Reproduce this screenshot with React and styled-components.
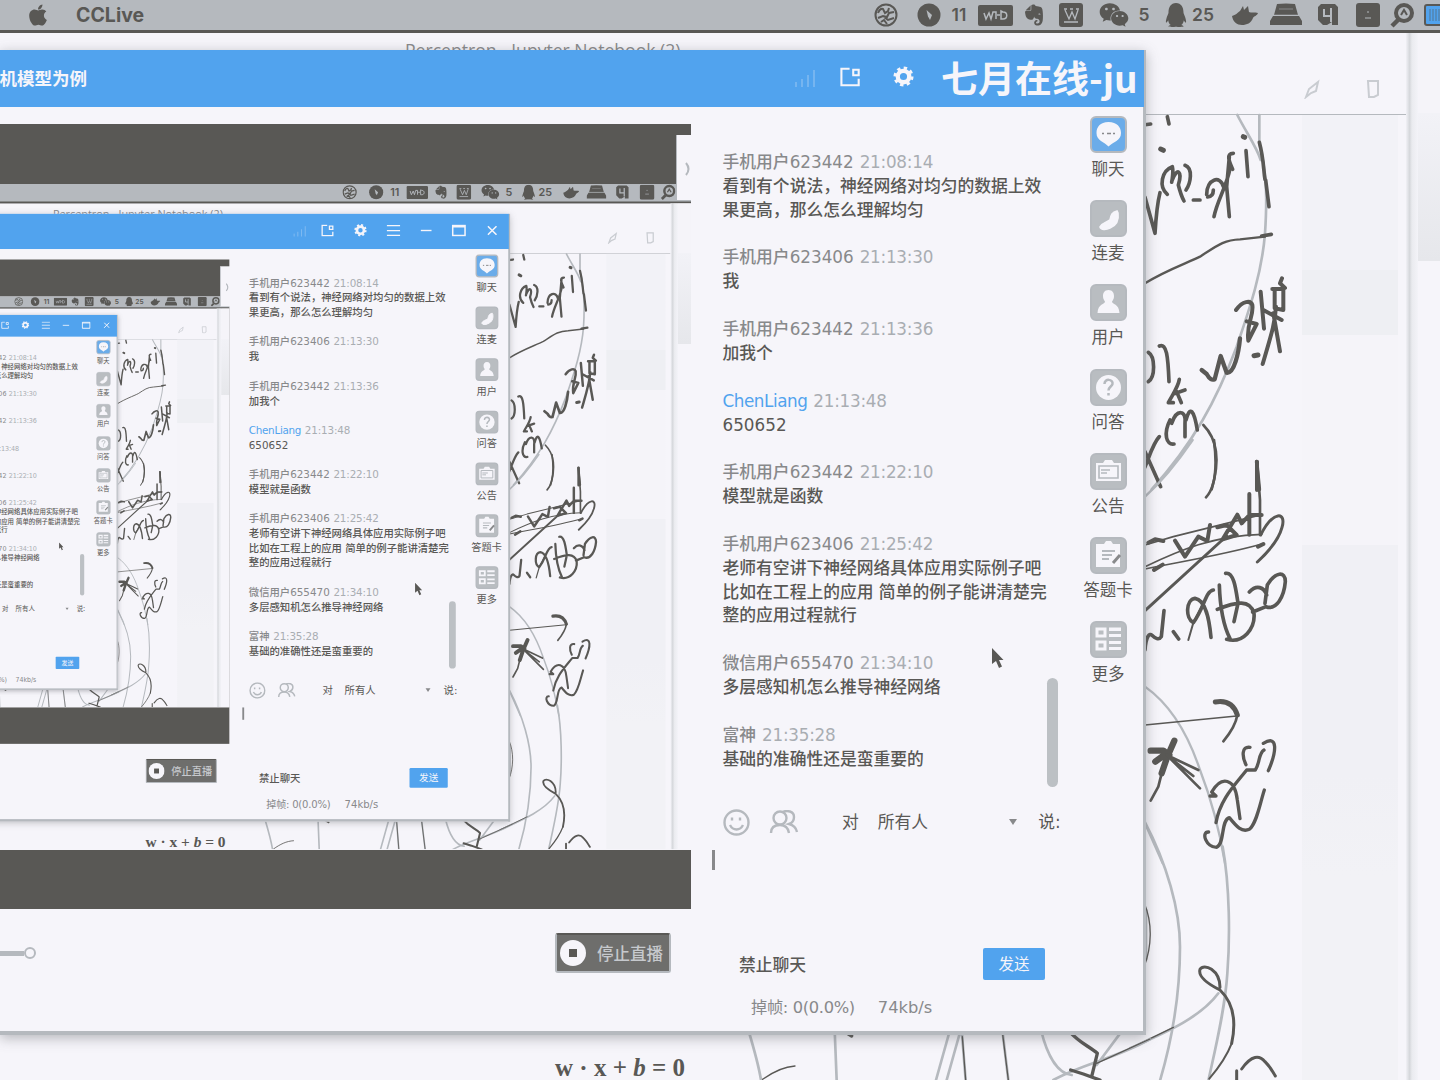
import React from 'react';
import styled, { createGlobalStyle } from 'styled-components';
import { FaApple, FaEvernote, FaWeixin, FaQq } from 'react-icons/fa';

const C = {
  paper: '#f6f5fa',
  grey: '#b5b9be',
  mid: '#88898b',
  ink: '#595855',
  blue: '#51a3ee',
};

const SCALE = 0.617;
const LEVELS = 3;

const GlobalStyle = createGlobalStyle`
  *, *::before, *::after { box-sizing: border-box; }
  body {
    margin: 0;
    background: ${C.paper};
    overflow: hidden;
    font-family: "DejaVu Sans", "Noto Sans CJK SC", sans-serif;
  }
  svg { display: block; }
`;

/* ---------- screen & desktop ---------- */

const Screen = styled.div`
  position: relative;
  width: 1440px;
  height: 1080px;
  overflow: hidden;
  background: ${C.paper};
  color: ${C.ink};
  display: flex;
  flex-direction: column;
`;

const MenuBar = styled.header`
  flex: none;
  height: 33px;
  display: flex;
  align-items: center;
  background: ${C.grey};
  border-bottom: 3px solid ${C.ink};
  padding-left: 26px;
  overflow: hidden;
  & > svg { flex: none; }
`;

const AppName = styled.span`
  flex: none;
  width: 798px;
  margin-left: 26px;
  font: 700 19.5px/30px Inter, "Liberation Sans", sans-serif;
`;

const Slot = styled.span`
  flex: none;
  width: ${(p) => p.$w}px;
  margin-left: ${(p) => p.$gap}px;
  display: flex;
  justify-content: center;
  font: 600 17.5px/30px Inter, "Liberation Sans", sans-serif;
`;

const Desktop = styled.main`
  position: relative;
  flex: 1;
  display: flex;
  flex-direction: column;
`;

const BrowserTop = styled.div`
  height: 82px;
  width: 1406px;
  border-bottom: 1px solid ${C.grey};
  display: flex;
  justify-content: space-between;
`;

const BrowserTitle = styled.span`
  padding: 5px 0 0 405px;
  font: 17.6px/24px "Open Sans", "Liberation Sans", sans-serif;
  color: ${C.mid};
`;

const BrowserTools = styled.div`
  display: flex;
  gap: 43px;
  padding: 46px 25px 0 0;
  color: #c9ccd1;
`;

const Page = styled.div`
  flex: 1;
  display: flex;
  justify-content: flex-end;
`;

const SideShade = styled.div`
  width: 96px;
  background: linear-gradient(#f2f2f7 0 155px, #eeeff3 155px 220px, #f5f4f9 220px 430px, #f0f0f5 430px 660px, #f2f2f6 760px);
`;

const EdgeShade = styled.div`
  width: 12px;
  margin: -82px 0 0 8px;
  background: linear-gradient(90deg, #f1f1f6, #d5d7db 30%, #eaebef 50%, #f3f3f8);
`;

const Gutter = styled.div`
  width: 22px;
  margin-top: -82px;
  background: linear-gradient(#f5f4f9 0 80px, #f2f2f7 80px, #e6e7eb 228px, ${C.paper} 228px);
`;

const Sketch = styled.svg`
  position: absolute;
  left: 0;
  top: -33px;
  fill: none;
  stroke-linecap: round;
  stroke-linejoin: round;
`;

const Formula = styled.div`
  position: absolute;
  left: 555px;
  top: 1020px;
  font: bold 25px/30px "Liberation Serif", serif;
  white-space: pre;
  i { font-style: italic; }
`;

/* ---------- live window ---------- */

const Window = styled.section`
  position: absolute;
  left: 0;
  top: 17px;
  width: 1146px;
  height: 985px;
  display: flex;
  flex-direction: column;
  background: ${C.paper};
  border-right: 3px solid ${C.grey};
  border-bottom: 4px solid ${C.grey};
  box-shadow: 0 3px 12px rgba(90, 92, 98, 0.42);
`;

const TitleBar = styled.div`
  position: relative;
  flex: none;
  height: 57px;
  margin-right: -1px;
  display: flex;
  align-items: center;
  background: ${C.blue};
  color: ${C.paper};
  overflow: hidden;
`;

const Title = styled.div`
  width: 87px;
  display: flex;
  justify-content: flex-end;
  white-space: nowrap;
  font-size: 17.5px;
  font-weight: 700;
  margin: 0 699px 3px 0;
`;

const TitleIcon = styled.span`
  flex: none;
  width: ${(p) => p.$w || 53.2}px;
  margin-bottom: 4px;
  display: flex;
  justify-content: center;
  opacity: ${(p) => (p.$faint ? 0.3 : 1)};
`;

const Watermark = styled.div`
  position: absolute;
  left: 941px;
  top: 0;
  font: 700 37px/54px "Noto Sans CJK SC", sans-serif;
  white-space: nowrap;
`;

const Body = styled.div`
  flex: 1;
  display: flex;
  min-height: 0;
`;

const StageColumn = styled.div`
  flex: none;
  width: 691px;
  padding-top: 17px;
  display: flex;
  flex-direction: column;
`;

const Stage = styled.div`
  position: relative;
  height: 785px;
  padding: 60px 0 59px;
  background: ${C.ink};
`;

const Capture = styled.div`
  height: 666px;
  overflow: hidden;
  background: ${C.paper};
`;

const Shrink = styled.div`
  width: 1440px;
  height: 1080px;
  margin: -1px 0 0 -197.400px;
  transform: scale(${SCALE});
  transform-origin: 0 0;
`;

const Handle = styled.div`
  position: absolute;
  right: -2px;
  top: 11px;
  width: 17px;
  height: 65px;
  padding-top: 2px;
  display: flex;
  align-items: center;
  justify-content: flex-end;
  border-left: 1px solid ${C.grey};
  background: ${C.paper};
  color: ${C.grey};
`;

const Controls = styled.div`
  display: flex;
  align-items: center;
  justify-content: space-between;
  padding: 24px 20px 0 0;
`;

const Slider = styled.div`
  display: flex;
  align-items: center;
`;

const Track = styled.div`
  width: 24px;
  height: 5px;
  background: ${C.grey};
`;

const Knob = styled.div`
  width: 12px;
  height: 12px;
  border: 2.5px solid ${C.grey};
  border-radius: 50%;
`;

const StopButton = styled.button`
  width: 116px;
  height: 40px;
  padding: 0 0 0 3px;
  display: flex;
  align-items: center;
  gap: 11px;
  border: 2px solid ${C.grey};
  border-top-color: ${C.ink};
  border-radius: 3px;
  background: #6e6e6c;
  color: #c6c9cd;
  font: 500 16.5px "Noto Sans CJK SC", sans-serif;
  white-space: nowrap;
`;

const StopDisc = styled.span`
  flex: none;
  width: 26px;
  height: 26px;
  border-radius: 50%;
  background: linear-gradient(${C.ink}, ${C.ink}) center / 8px 8px no-repeat ${C.paper};
`;

/* ---------- chat ---------- */

const Chat = styled.div`
  flex: none;
  width: 382px;
  display: flex;
  flex-direction: column;
  font-size: 16.8px;
`;

const Log = styled.div`
  height: 698px;
  display: flex;
  justify-content: space-between;
  padding: 44px 15px 0 31.5px;
`;

const Messages = styled.div`
  display: flex;
  flex-direction: column;
  gap: 23.8px;
  line-height: 23.9px;
  white-space: nowrap;
`;

const Message = styled.div`
  display: flex;
  flex-direction: column;
  font-weight: 500;
`;

const Meta = styled.div`
  display: flex;
  gap: 6px;
  height: 23.9px;
`;

const Sender = styled.span`
  color: ${(p) => (p.$host ? C.blue : C.mid)};
  letter-spacing: ${(p) => (p.$host ? -0.45 : 0)}px;
`;

const Time = styled.time`
  color: #a9adb2;
  letter-spacing: -0.25px;
`;

const Line = styled.span`
  height: 23.9px;
`;

const Thumb = styled.div`
  width: 11px;
  height: 109px;
  margin-top: 527px;
  margin-left: -10px;
  border-radius: 6px;
  background: #bcc0c4;
`;

const ToolRow = styled.div`
  height: 34px;
  display: flex;
  align-items: center;
  padding-left: 32px;
  color: ${C.grey};
`;

const Label = styled.span`
  color: ${C.ink};
  margin: 0 0 2px ${(p) => p.$gap}px;
  white-space: nowrap;
`;

const PeopleIcon = styled.svg`
  margin-left: 19px;
`;

const Caret = styled.span`
  margin-left: 81px;
  border: 4px solid transparent;
  border-top: 6px solid ${C.mid};
  border-bottom: 0;
`;

const Input = styled.div`
  height: 109px;
  padding: 11px 0 0 21px;
`;

const TextCursor = styled.div`
  width: 3px;
  height: 20px;
  background: ${C.mid};
`;

const ActionRow = styled.div`
  height: 32px;
  display: flex;
  align-items: center;
  justify-content: space-between;
  padding: 0 28px 0 48px;
  font-weight: 500;
`;

const Send = styled.button`
  width: 62px;
  height: 32px;
  padding: 0 0 2px;
  border: 0;
  border-radius: 2px;
  background: ${C.blue};
  color: ${C.paper};
  font: 15.5px "Noto Sans CJK SC", sans-serif;
`;

const Status = styled.div`
  display: flex;
  gap: 23px;
  padding: 16px 0 0 60px;
  line-height: 24px;
  font-size: 16.3px;
  color: ${C.mid};
  white-space: nowrap;
`;

const Dropped = styled.span`
  letter-spacing: -0.35px;
`;

/* ---------- right rail ---------- */

const Rail = styled.nav`
  flex: none;
  width: 70px;
  padding-top: 9px;
  display: flex;
  flex-direction: column;
  gap: 12.2px;
`;

const RailItem = styled.div`
  height: 72px;
  display: flex;
  flex-direction: column;
  align-items: center;
  gap: 4px;
  font-size: 16.5px;
  line-height: 25px;
  white-space: nowrap;
`;

const Tile = styled.span`
  width: 37px;
  height: 37px;
  border-radius: 6px;
  border: 2px solid ${C.grey};
  background: ${(p) => (p.$active ? '#6bace9' : '#b9bdc1')};
  color: ${C.paper};
`;

const Pointer = styled.svg`
  position: absolute;
  left: 990px;
  top: 597px;
`;

/* ---------- drawings ---------- */

const Menu = {
  globe: (
    <svg width="24" height="24" viewBox="0 0 24 24" fill="none" stroke={C.ink} strokeWidth="2">
      <circle cx="12" cy="12" r="10.5" />
      <path d="M4 10q2-5 5-4l2 4 3-2 1-3M20 9l-5 1-2 4-4-1-5 2M10 14l4 3 6-2M7 19l3-2 3 4" strokeWidth="2" />
    </svg>
  ),
  compass: (
    <svg width="24" height="24" viewBox="0 0 24 24">
      <circle cx="12" cy="12" r="11.5" fill={C.ink} />
      <path d="M9.500 7l5.500 5-2 5-2-3.500z" fill={C.grey} />
    </svg>
  ),
  drive: (
    <svg width="32" height="24" viewBox="0 0 32 24" fill={C.ink}>
      <path d="M7 1q9-1 18 0l3 11H4z" />
      <path d="M3 13h26l3 5v4H0v-4z" />
      <path d="M4 12h24M9 6h14" stroke={C.grey} strokeWidth=".5" />
    </svg>
  ),
  bird: (
    <svg width="26" height="24" viewBox="0 0 26 24" fill={C.ink}>
      <path d="M0 13c4-1 5-3 8-5l3-5 1 4 4-4 1 6c2 1 6 0 9 1-1 3-4 3-5 5-2 5-6 7-11 7S1 19 0 13z" />
    </svg>
  ),
  notch: (
    <svg width="22" height="24" viewBox="0 0 22 24">
      <path d="M4 1h14l3 3v18h-6v-3l-5 3H6l-5-5V4z" fill={C.ink} />
      <path d="M7 6v7h7M14 5v14" fill="none" stroke={C.grey} strokeWidth="2" />
    </svg>
  ),
  card: (
    <svg width="24" height="24" viewBox="0 0 24 24">
      <rect width="24" height="24" rx="3" fill={C.ink} />
      <path d="M11 9h2M9 15h6" stroke={C.grey} strokeWidth="1" />
    </svg>
  ),
  find: (
    <svg width="24" height="26" viewBox="0 0 24 26" fill="none" stroke={C.ink}>
      <circle cx="14" cy="11" r="8" strokeWidth="4" />
      <path d="M8 18l-6 6" strokeWidth="4.500" />
      <path d="M11 13l3-5 3 5" strokeWidth="2" />
    </svg>
  ),
  box: (
    <svg width="24" height="24" viewBox="0 0 24 24" fill="none">
      <rect width="24" height="24" rx="3" fill={C.ink} />
      <path d="M5 6h3M11 6h3M17 6h3M6 7l4 9 3-7 3 7 3-9M5 19h14" stroke={C.grey} strokeWidth="1.300" />
    </svg>
  ),
  disk: (
    <svg width="35" height="21" viewBox="0 0 35 21" fill="none">
      <rect width="35" height="21" rx="2" fill={C.ink} />
      <path d="M6 8l2 6 3-6 2 6 2-7h3v7M19 10h3M23 6v8h2c5 0 5-7 0-7z" stroke={C.grey} strokeWidth="1.500" />
    </svg>
  ),
  screen: (
    <svg width="24" height="22" viewBox="0 0 24 22">
      <rect x="1" y="1" width="30" height="20" rx="2" fill={C.blue} stroke={C.ink} strokeWidth="2" />
      <path d="M6 5v12M9 5v12M12 5v12M15 5v12" stroke={C.ink} strokeWidth="1" opacity=".6" />
    </svg>
  ),
};

const popOut = (
  <svg width="23" height="20" viewBox="0 0 24 22" fill="none" stroke={C.paper} strokeWidth="2.300">
    <path d="M11 2H2v18h19v-7M15 3h6v6h-6z" />
  </svg>
);
const gear = (
  <svg width="21" height="21" viewBox="0 0 22 22" fill="none" stroke={C.paper}>
    <circle cx="11" cy="11" r="6" strokeWidth="4.500" />
    <circle cx="11" cy="11" r="9" strokeWidth="3" strokeDasharray="3.530 3.530" />
  </svg>
);
const burger = (
  <svg width="22" height="20" viewBox="0 0 22 20" stroke={C.paper} strokeWidth="2">
    <path d="M0 2h22M0 10h22M0 18h22" />
  </svg>
);
const minus = (
  <svg width="18" height="4" stroke={C.paper} strokeWidth="2.500">
    <path d="M0 2h18" />
  </svg>
);
const maximize = (
  <svg width="24" height="20" fill="none" stroke={C.paper} strokeWidth="2.500">
    <path d="M2 2h20v16H2zM2 4h20" />
  </svg>
);
const close = (
  <svg width="16" height="16" stroke={C.paper} strokeWidth="2.500">
    <path d="M1 1l14 14M15 1L1 15" />
  </svg>
);
const signal = (
  <svg width="22" height="20" stroke={C.paper} strokeWidth="1.500">
    <path d="M2 20v-5M8 20v-8M14 20V8M20 20V3" />
  </svg>
);

const TileArt = ({ kind }) => (
  <svg width="33" height="33" viewBox="0 0 33 33" fill="none" stroke={C.grey} strokeWidth="1.600">
    {kind === 'chat' && (
      <>
        <path d="M16.500 4C8 4 4.500 9 4.500 15c0 8 8 9 12 13.500C21 24 29 23 29 15c0-6-4-11-12.500-11z" fill={C.paper} stroke="none" />
        <path d="M10 15.500h2M15 15.500h4M21 15.500h2" stroke={C.mid} />
      </>
    )}
    {kind === 'call' && (
      <path d="M25 9c-5 1-6 4-7 9-4 3-7 2-10 7 1 3 6 3 10 1 7-3 9-8 8-15z" fill={C.paper} stroke={C.paper} />
    )}
    {kind === 'user' && (
      <path d="M16.500 4c-4 0-5.500 3-5.500 6s1 4 2 5.500c0 3-7 2-7.500 11.500h22c-.5-9.500-7.500-8.500-7.500-11.500 1-1.500 2-2.500 2-5.500s-1.500-6-5.500-6z" fill={C.paper} stroke="none" />
    )}
    {kind === 'ask' && (
      <>
        <circle cx="16.500" cy="16.500" r="12.500" fill={C.paper} stroke="none" />
        <path d="M12.500 13c0-6 9-5 8 0-.5 2.500-4 3-4 6.500M16.500 22v2.500" strokeWidth="2.500" />
      </>
    )}
    {kind === 'notice' && (
      <>
        <path d="M4 8h7l2-3h7l2 3h7v18H4z" fill={C.paper} stroke="none" />
        <path d="M7 11h19v12H7zM9 15h9M9 18h6" />
      </>
    )}
    {kind === 'quiz' && (
      <>
        <path d="M4 5h8l2-3h5l2 3h7v23H4z" fill={C.paper} stroke="none" />
        <path d="M10 12h13M10 16h10M10 20h7" strokeWidth="1.800" />
        <path d="M28 16l-7 8" stroke={C.mid} strokeWidth="3" />
      </>
    )}
    {kind === 'more' && (
      <>
        <path d="M5 6h8v7H5zM5 19h8v7H5z" stroke={C.paper} strokeWidth="3" />
        <path d="M17 4.500h12v3.500H17zM17 11h12v3H17zM17 18h12v3H17zM17 24h12v3H17z" fill={C.paper} stroke="none" />
      </>
    )}
  </svg>
);

const Ink = ({ d, w = 11, c = C.ink }) => <path d={d} stroke={c} strokeWidth={w} />;
const third = (x, y) => `translate(${x} ${y}) scale(.33333)`;

const Whiteboard = () => (
  <Sketch width="1440" height="1080" viewBox="0 0 1440 1080">
    <g transform={third(1130, 90)}>
      <Ink c={C.grey} w={8} d="M388 75V160C408 240 413 310 405 430C395 560 350 680 320 770C260 930 190 1060 65 1198M322 75C350 130 380 170 392 210" />
      <Ink d="M40 105L62 102M112 80L117 102M45 322L75 430C78 380 82 340 90 308M112 313C85 290 95 242 127 230C132 250 122 290 126 272C142 228 158 245 145 285C150 305 155 320 162 333M165 226C190 235 182 280 168 300M190 330H210M230 314C230 265 272 255 280 290M233 321C247 320 250 308 250 300M310 190C285 190 300 220 308 238M298 200L290 290L298 380M300 235C290 290 262 330 252 380M348 182L354 260M388 157C402 210 400 240 405 268M407 270L417 350" />
      <Ink w={15} d="M92 177L100 181M340 140L344 142M372 797L384 795" />
      <Ink w={7} d="M45 580C110 540 170 520 210 500C260 468 280 450 330 448L405 440" />
      <Ink w={11} d="M395 438L424 433" />
      <Ink w={12} d="M318 660C338 632 362 630 367 645C372 680 348 700 355 752L380 702L350 694M392 605L402 716M400 660L455 690M427 597H460V660L434 655V600M456 565L450 580L465 594M438 650C435 700 425 730 398 822M430 670L450 784" />
      <Ink w={13} d="M215 840L230 852C240 870 246 870 254 868L272 798L290 848C312 852 326 790 330 745" />
      <Ink d="M55 787C76 800 76 862 55 875M88 768C110 758 114 800 117 875M148 868C145 890 130 910 115 938H130M130 912L165 900M140 905L154 938M120 990C100 1030 108 1066 132 1062M125 1000C140 955 170 960 165 1000V1040M168 990C180 945 192 960 202 1020M88 1040C68 1060 55 1110 43 1135M45 1085L92 1190M380 1115L388 1198" />
      <Ink w={8} d="M220 1005C265 1050 268 1120 245 1198" />
    </g>
    <g transform={third(1130, 440)}>
      <Ink c={C.grey} w={7} d="M188 0C140 70 100 120 45 170M45 740C130 800 180 900 210 990C245 1080 270 1180 285 1270M45 1150L98 1270" />
      <Ink w={8} d="M252 0C262 80 258 140 228 172M381 65L390 180V285" />
      <Ink w={5} d="M45 315L130 290L395 224M45 380C150 330 250 287 395 283M45 387C150 365 280 345 395 312M45 855L320 828" />
      <Ink w={12} d="M55 308L75 298L100 303M135 302L165 350L205 290L232 303L240 255M262 262L290 255L320 285L278 298L322 224L335 250L358 225L395 225M72 390L98 374M384 320L400 312M358 162V284M381 65V150" />
      <Ink w={9} d="M392 285C430 210 470 215 456 262C445 305 410 340 382 366M45 512L290 288" />
      <Ink w={11} d="M45 630C48 585 60 580 65 585C78 598 88 600 94 590L102 512M130 575L146 597M250 450C225 455 225 500 190 548C165 535 168 478 195 475C228 480 238 540 243 592M268 435C270 500 282 560 300 596M287 400C312 395 318 450 324 490L312 545M262 508C320 485 360 478 372 520C376 565 340 612 290 598M358 456C380 432 402 442 410 465M405 490L412 435C436 395 466 392 466 425C462 470 440 512 408 500L368 516" />
      <Ink w={6} d="M225 480L190 548L175 600" />
      <Ink w={15} d="M256 786C290 780 312 795 322 825" />
      <Ink w={8} d="M322 825C318 850 300 880 280 904" />
      <Ink w={19} d="M62 932H100L118 945M133 902L112 950L95 1000M76 965L110 940" />
      <Ink w={8} d="M95 1000L85 1040L62 1082M110 945L205 990M115 950L190 1008M120 955L210 1045" />
      <Ink w={10} d="M360 922C334 918 336 950 348 974M400 910C445 882 440 935 415 992M402 930C385 940 390 970 376 990H350C310 1040 270 1080 258 1148M240 1068H258L245 1056C275 1005 315 1015 322 1080L330 1136M236 1176C212 1175 228 1222 260 1222C285 1210 272 1140 298 1133C320 1160 335 1178 358 1168C380 1150 390 1090 403 1050" />
    </g>
    <g transform={third(1130, 760)}>
      <Ink c={C.grey} w={8} d="M45 187C110 310 150 450 150 560C150 720 120 860 90 962M278 260C300 380 300 540 292 640C285 750 255 870 235 962M0 865C100 820 210 775 265 700M48 450V600" />
      <Ink w={4} d="M43 430C68 490 65 560 43 618M0 865L130 802" />
      <Ink w={9} d="M270 682C270 630 222 608 210 628C202 655 250 680 270 690C312 730 318 790 305 850M335 927C365 885 388 885 405 905C425 925 430 940 436 948M320 932V962" />
      <Ink w={6} d="M305 850C290 890 260 930 238 956" />
    </g>
    <g transform={third(700, 790)}>
      <Ink c={C.grey} w={8} d="M145 720C160 770 175 820 183 870M404 720L410 870M750 720L708 870M782 720L740 870M785 720L797 870M907 720L925 870M1023 720C1040 790 1070 850 1115 855M1265 724L1190 825M1060 870C1150 820 1250 805 1350 747" />
      <Ink w={4} d="M188 868C220 845 250 830 285 828M787 740L797 870M907 725L925 870M1190 820L1350 747" />
      <Ink w={10} d="M432 724L455 738M1108 724C1140 760 1170 770 1192 790L1175 860M1112 840L1150 852L1200 870" />
    </g>
  </Sketch>
);

/* ---------- data ---------- */

const MENU_ITEMS = [
  [24, 0, Menu.globe],
  [24, 19, Menu.compass],
  [18, 9, '11'],
  [35, 10, Menu.disk],
  [24, 9, <FaEvernote size={24} key="e" />],
  [24, 13, Menu.box],
  [30, 16, <FaWeixin size={30} key="w" />],
  [12, 9, '5'],
  [22, 15, <FaQq size={24} key="q" />],
  [24, 4, '25'],
  [26, 17, Menu.bird],
  [32, 12, Menu.drive],
  [22, 15, Menu.notch],
  [24, 17, Menu.card],
  [24, 10, Menu.find],
  [24, 10, Menu.screen],
];

const MESSAGES = [
  ['手机用户623442', '21:08:14', ['看到有个说法，神经网络对均匀的数据上效', '果更高，那么怎么理解均匀']],
  ['手机用户623406', '21:13:30', ['我']],
  ['手机用户623442', '21:13:36', ['加我个']],
  ['ChenLiang', '21:13:48', ['650652'], true],
  ['手机用户623442', '21:22:10', ['模型就是函数']],
  ['手机用户623406', '21:25:42', ['老师有空讲下神经网络具体应用实际例子吧', '比如在工程上的应用 简单的例子能讲清楚完', '整的应用过程就行']],
  ['微信用户655470', '21:34:10', ['多层感知机怎么推导神经网络']],
  ['富神', '21:35:28', ['基础的准确性还是蛮重要的']],
];

const RAIL = [
  ['chat', '聊天'],
  ['call', '连麦'],
  ['user', '用户'],
  ['ask', '问答'],
  ['notice', '公告'],
  ['quiz', '答题卡'],
  ['more', '更多'],
];

/* ---------- composition ---------- */

const ChatPanel = () => (
  <Chat>
    <Log>
      <Messages>
        {MESSAGES.map(([name, time, lines, host]) => (
          <Message key={time}>
            <Meta>
              <Sender $host={host}>{name}</Sender>
              <Time>{time}</Time>
            </Meta>
            {lines.map((line) => (
              <Line key={line}>{line}</Line>
            ))}
          </Message>
        ))}
      </Messages>
      <Thumb />
    </Log>
    <ToolRow>
      <svg width="27" height="27" viewBox="0 0 27 27" fill="none" stroke="currentColor" strokeWidth="2.400">
        <circle cx="13.500" cy="13.500" r="12" />
        <path d="M9 8.500v3M17 8.500v3M7 16c3 6 10 6 13 0" />
      </svg>
      <PeopleIcon width="30" height="25" viewBox="0 0 30 25" fill="none" stroke="currentColor" strokeWidth="2.400">
        <circle cx="11" cy="8" r="6.500" />
        <path d="M2 23c0-5 3-8 9-8 4 0 8 2 9 8M14 2c4-2 11-1 11 5 0 4-2 6-5 7 4 1 7 3 8 8" />
      </PeopleIcon>
      <Label $gap={43}>对</Label>
      <Label $gap={19}>所有人</Label>
      <Caret />
      <Label $gap={21}>说:</Label>
    </ToolRow>
    <Input>
      <TextCursor />
    </Input>
    <ActionRow>
      <span>禁止聊天</span>
      <Send>发送</Send>
    </ActionRow>
    <Status>
      <Dropped>掉帧: 0(0.0%)</Dropped>
      <span>74kb/s</span>
    </Status>
  </Chat>
);

const LiveScreen = ({ level = 0 }) => (
  <Screen>
    <MenuBar>
      <FaApple size={24} />
      <AppName>CCLive</AppName>
      {MENU_ITEMS.map(([w, gap, node], i) => (
        <Slot key={i} $w={w} $gap={gap}>{node}</Slot>
      ))}
    </MenuBar>
    <Desktop>
      <BrowserTop>
        <BrowserTitle>Perceptron - Jupyter Notebook (2)</BrowserTitle>
        <BrowserTools>
          <svg width="18" height="20" fill="none" stroke="currentColor" strokeWidth="2">
            <path d="M2 18l3-8 9-7-2 9-5 2z" />
          </svg>
          <svg width="16" height="20" fill="none" stroke="currentColor" strokeWidth="2">
            <path d="M3 2h10v14l-4 2H4z" />
          </svg>
        </BrowserTools>
      </BrowserTop>
      <Page>
        <SideShade />
        <EdgeShade />
        <Gutter />
      </Page>
      <Whiteboard />
      <Formula>w · x + <i>b</i> = 0</Formula>
      <Window>
        <TitleBar>
          <Title>机模型为例</Title>
          <TitleIcon $w={38} $faint>{signal}</TitleIcon>
          <TitleIcon>{popOut}</TitleIcon>
          <TitleIcon>{gear}</TitleIcon>
          {level === 0 ? (
            <Watermark>七月在线-ju</Watermark>
          ) : (
            <>
              <TitleIcon>{burger}</TitleIcon>
              <TitleIcon>{minus}</TitleIcon>
              <TitleIcon>{maximize}</TitleIcon>
              <TitleIcon>{close}</TitleIcon>
            </>
          )}
        </TitleBar>
        <Body>
          <StageColumn>
            <Stage>
              <Capture>
                {level + 1 < LEVELS && (
                  <Shrink>
                    <LiveScreen level={level + 1} />
                  </Shrink>
                )}
              </Capture>
              <Handle>
                <svg width="8" height="16" fill="none" stroke="currentColor" strokeWidth="2">
                  <path d="M1 2q5 6 0 12" />
                </svg>
              </Handle>
            </Stage>
            <Controls>
              <Slider>
                <Track />
                <Knob />
              </Slider>
              <StopButton>
                <StopDisc />
                停止直播
              </StopButton>
            </Controls>
          </StageColumn>
          <ChatPanel />
          <Rail>
            {RAIL.map(([kind, label]) => (
              <RailItem key={kind}>
                <Tile $active={kind === 'chat'}>
                  <TileArt kind={kind} />
                </Tile>
                {label}
              </RailItem>
            ))}
          </Rail>
        </Body>
        <Pointer width="16" height="24" viewBox="0 0 16 24">
          <path d="M2 1v16l4-3 3 7 3-1.500-3-6.500h4.500z" fill={C.ink} />
        </Pointer>
      </Window>
    </Desktop>
  </Screen>
);

export default function App() {
  return (
    <>
      <GlobalStyle />
      <LiveScreen />
    </>
  );
}
